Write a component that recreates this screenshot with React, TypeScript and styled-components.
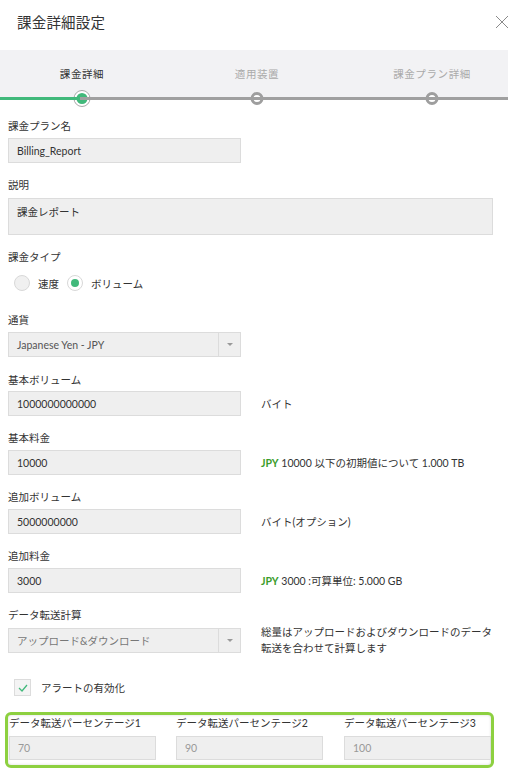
import React from "react";
import styled, { createGlobalStyle } from "styled-components";

const Global = createGlobalStyle`
  html, body { margin: 0; padding: 0; background: #fff; }
  body {
    font-family: Lato, "Noto Sans CJK JP", sans-serif;
    color: #333;
    font-size: 10.5px;
  }
  * { box-sizing: border-box; }
`;

const Page = styled.div`
  width: 508px;
  height: 770px;
  overflow: hidden;
  background: #fff;
`;

const Header = styled.div`
  height: 50px;
  display: flex;
  align-items: center;
  justify-content: space-between;
  padding: 0 0 8px 17px;
`;

const Title = styled.h1`
  margin: 0;
  font-size: 14.5px;
  font-weight: 400;
  color: #333;
  letter-spacing: 0.2px;
`;

const CloseBtn = styled.button`
  border: 0;
  background: none;
  padding: 0;
  margin-top: 2px;
  margin-right: -2px;
  width: 16px;
  height: 16px;
  display: flex;
`;

const Stepper = styled.div`
  position: relative;
  height: 50px;
  background: #f2f2f4;
  display: grid;
  grid-template-columns: 164px 186px 158px;
  &::after {
    content: "";
    position: absolute;
    left: 0;
    right: 0;
    top: 47px;
    height: 3px;
    background: linear-gradient(to right, #41b97b 0 80px, #a0a0a0 80px);
  }
`;

const Step = styled.div<{ $shift?: number }>`
  position: relative;
  display: flex;
  flex-direction: column;
  align-items: center;
  padding-top: 16px;
  transform: translateX(${(p) => p.$shift ?? 0}px);
`;

const StepLabel = styled.span<{ $active?: boolean }>`
  font-size: 10.5px;
  line-height: 16px;
  color: ${(p) => (p.$active ? "#333" : "#aaa")};
  letter-spacing: 0.6px;
`;

const Node = styled.span<{ $active?: boolean }>`
  position: absolute;
  z-index: 1;
  left: 50%;
  top: ${(p) => (p.$active ? "40px" : "42px")};
  transform: translateX(-50%);
  width: ${(p) => (p.$active ? "17px" : "13px")};
  height: ${(p) => (p.$active ? "17px" : "13px")};
  border-radius: 50%;
  background: #fff;
  border: ${(p) => (p.$active ? "1.5px solid #a8a8a8" : "3px solid #9e9e9e")};
  display: flex;
  align-items: center;
  justify-content: center;
  &::after {
    content: "";
    display: ${(p) => (p.$active ? "block" : "none")};
    width: 11px;
    height: 11px;
    border-radius: 50%;
    background: #41b97b;
  }
`;

const Form = styled.div`
  padding: 18px 0 0 8px;
  display: flex;
  flex-direction: column;
`;

const Group = styled.div<{ $gap?: number }>`
  margin-bottom: ${(p) => p.$gap ?? 14}px;
  display: flex;
  flex-direction: column;
`;

const Label = styled.div<{ $mb?: number }>`
  font-size: 10.5px;
  line-height: 16px;
  color: #333;
  margin-bottom: ${(p) => p.$mb ?? 4}px;
  white-space: nowrap;
`;

const Row = styled.div<{ $top?: boolean }>`
  display: flex;
  align-items: ${(p) => (p.$top ? "flex-start" : "center")};
  gap: 20px;
`;

const Input = styled.div<{ $w?: number; $muted?: boolean; $h?: number }>`
  width: ${(p) => p.$w ?? 233}px;
  height: ${(p) => p.$h ?? 25}px;
  background: #efefef;
  border: 1px solid #dcdcdc;
  padding: 0 8px;
  display: flex;
  align-items: center;
  color: ${(p) => (p.$muted ? "#999" : "#333")};
  font-size: 10.5px;
  flex-shrink: 0;
`;

const TextArea = styled.div`
  width: 485px;
  height: 37px;
  background: #efefef;
  border: 1px solid #dcdcdc;
  padding: 5px 8px;
  font-size: 10.5px;
  color: #333;
`;

const Select = styled.div<{ $muted?: boolean }>`
  width: 233px;
  height: 25px;
  background: #efefef;
  border: 1px solid #dcdcdc;
  display: flex;
  align-items: stretch;
  flex-shrink: 0;
  color: ${(p) => (p.$muted ? "#777" : "#555")};
`;

const SelectText = styled.div`
  flex: 1;
  display: flex;
  align-items: center;
  padding-left: 8px;
  font-size: 10.5px;
`;

const SelectArrow = styled.div`
  width: 22px;
  border-left: 1px solid #dcdcdc;
  display: flex;
  align-items: center;
  justify-content: center;
  &::after {
    content: "";
    border-left: 3px solid transparent;
    border-right: 3px solid transparent;
    border-top: 3px solid #999;
  }
`;

const Note = styled.div<{ $up?: number }>`
  font-size: 10.5px;
  line-height: 16px;
  color: #333;
  white-space: nowrap;
  margin-top: ${(p) => -(p.$up ?? 0)}px;
`;

const Jpy = styled.b`
  color: #3a9d2b;
  font-weight: 700;
`;

const RadioRow = styled.div`
  display: flex;
  align-items: center;
  margin-top: 9px;
  padding-left: 6px;
  height: 18px;
`;

const Radio = styled.span<{ $checked?: boolean }>`
  width: 16px;
  height: 16px;
  border-radius: 50%;
  border: 1px solid #d8d8d8;
  background: ${(p) => (p.$checked ? "#fff" : "#f0f0f0")};
  display: flex;
  align-items: center;
  justify-content: center;
  margin-right: 8px;
  &::after {
    content: "";
    display: ${(p) => (p.$checked ? "block" : "none")};
    width: 8px;
    height: 8px;
    border-radius: 50%;
    background: #41b97b;
  }
`;

const RadioText = styled.span`
  font-size: 10.5px;
  margin-right: 8px;
`;

const CheckRow = styled.div`
  display: flex;
  align-items: center;
  gap: 10px;
  padding-left: 6px;
  margin-top: 23px;
  height: 17px;
  margin-bottom: 16px;
`;

const CheckBox = styled.span`
  width: 17px;
  height: 17px;
  border: 1px solid #dcdcdc;
  background: #f4f4f4;
  display: flex;
  align-items: center;
  justify-content: center;
`;

const Highlight = styled.div`
  margin-left: -3px;
  width: 489px;
  height: 56px;
  border: 3px solid #8dd040;
  border-radius: 6px;
  box-shadow: inset 0 0 3px rgba(0, 0, 0, 0.15);
  padding: 0 0 0 1px;
  display: grid;
  grid-template-columns: 147px 148px 147px;
  column-gap: 20px;
`;

const Col = styled.div`
  display: flex;
  flex-direction: column;
`;

const steps = [
  { label: "課金詳細", active: true, shift: 0 },
  { label: "適用装置", active: false, shift: 0 },
  { label: "課金プラン詳細", active: false, shift: 3 },
];

export default function App() {
  return (
    <Page>
      <Global />
      <Header>
        <Title>課金詳細設定</Title>
        <CloseBtn aria-label="close">
          <svg width="16" height="16" viewBox="0 0 16 16">
            <path d="M2 2 L14 14 M14 2 L2 14" stroke="#8a8a8a" strokeWidth="1" fill="none" />
          </svg>
        </CloseBtn>
      </Header>

      <Stepper>
        {steps.map((s) => (
          <Step key={s.label} $shift={s.shift}>
            <StepLabel $active={s.active}>{s.label}</StepLabel>
            <Node $active={s.active} />
          </Step>
        ))}
      </Stepper>

      <Form>
        <Group>
          <Label>課金プラン名</Label>
          <Input>Billing_Report</Input>
        </Group>
        <Group>
          <Label $mb={5}>説明</Label>
          <TextArea>課金レポート</TextArea>
        </Group>
        <Group $gap={20}>
          <Label $mb={0}>課金タイプ</Label>
          <RadioRow>
            <Radio />
            <RadioText>速度</RadioText>
            <Radio $checked />
            <RadioText>ボリューム</RadioText>
          </RadioRow>
        </Group>
        <Group $gap={15}>
          <Label>通貨</Label>
          <Select>
            <SelectText>Japanese Yen - JPY</SelectText>
            <SelectArrow />
          </Select>
        </Group>
        <Group>
          <Label $mb={3}>基本ボリューム</Label>
          <Row>
            <Input>1000000000000</Input>
            <Note>バイト</Note>
          </Row>
        </Group>
        <Group>
          <Label>基本料金</Label>
          <Row>
            <Input>10000</Input>
            <Note>
              <Jpy>JPY</Jpy> 10000 以下の初期値について 1.000 TB
            </Note>
          </Row>
        </Group>
        <Group>
          <Label>追加ボリューム</Label>
          <Row>
            <Input>5000000000</Input>
            <Note>バイト(オプション)</Note>
          </Row>
        </Group>
        <Group>
          <Label>追加料金</Label>
          <Row>
            <Input>3000</Input>
            <Note>
              <Jpy>JPY</Jpy> 3000 :可算単位: 5.000 GB
            </Note>
          </Row>
        </Group>
        <Group $gap={0}>
          <Label $mb={5}>データ転送計算</Label>
          <Row $top>
            <Select $muted>
              <SelectText>アップロード&amp;ダウンロード</SelectText>
              <SelectArrow />
            </Select>
            <Note $up={4}>
              総量はアップロードおよびダウンロードのデータ
              <br />
              転送を合わせて計算します
            </Note>
          </Row>
        </Group>
        <CheckRow>
          <CheckBox>
            <svg width="10" height="8" viewBox="0 0 10 8">
              <path d="M1 4 L4 7 L9 1" stroke="#41b97b" strokeWidth="1.3" fill="none" />
            </svg>
          </CheckBox>
          <Note>アラートの有効化</Note>
        </CheckRow>
        <Highlight>
          {[
            ["データ転送パーセンテージ1", "70"],
            ["データ転送パーセンテージ2", "90"],
            ["データ転送パーセンテージ3", "100"],
          ].map(([l, v]) => (
            <Col key={l}>
              <Label $mb={5}>{l}</Label>
              <Input $w={147} $h={24} $muted>
                {v}
              </Input>
            </Col>
          ))}
        </Highlight>
      </Form>
    </Page>
  );
}
